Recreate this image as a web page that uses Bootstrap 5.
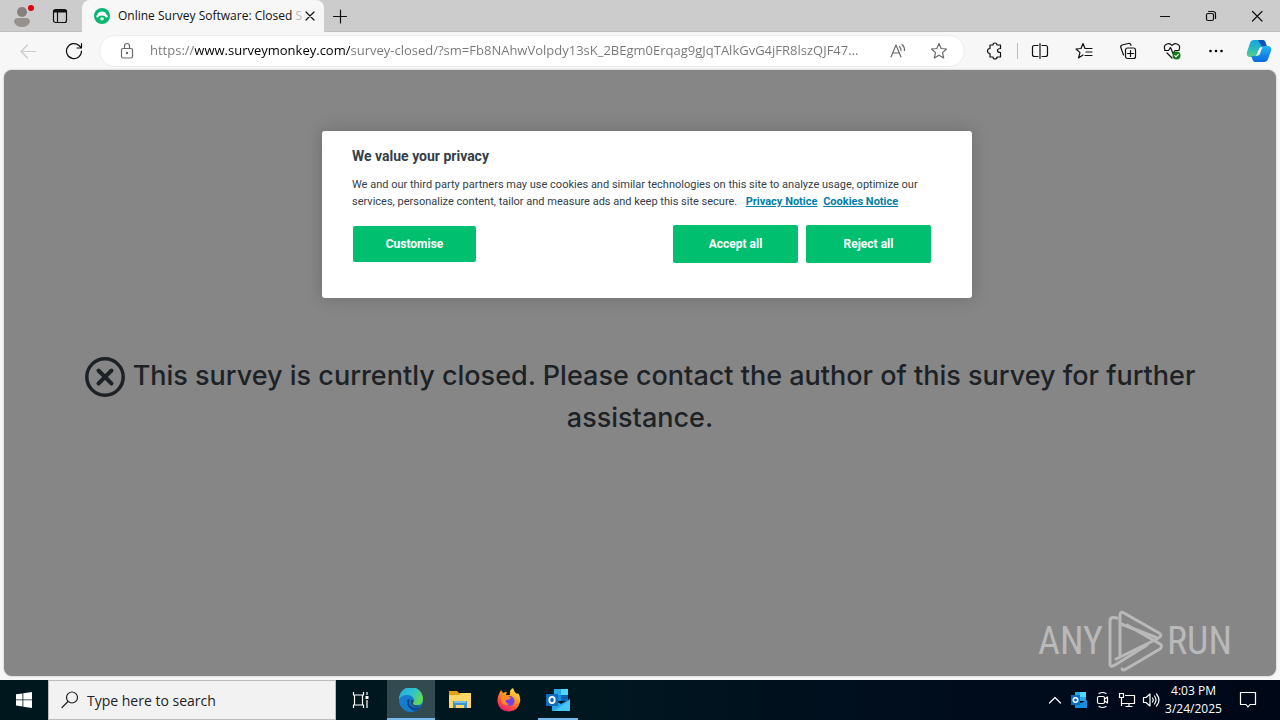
<!DOCTYPE html>
<html lang="en">
<head>
<meta charset="utf-8">
<meta name="viewport" content="width=device-width, initial-scale=1">
<title>Online Survey Software: Closed Survey</title>
<link rel="stylesheet" href="https://cdn.jsdelivr.net/npm/bootstrap@5.3.0/dist/css/bootstrap.min.css">
<style>
  body { font-family: "Open Sans", "Noto Sans", sans-serif; background: #f7f7f7; color: #111; }
  svg { display: block; flex: none; }
  .line-icon { fill: none; stroke: currentColor; stroke-width: 1.2; stroke-linecap: round; stroke-linejoin: round; }
  .icon-btn { border: 0; background: none; padding: 0; color: inherit; display: flex; align-items: center; justify-content: center; flex: none; }
  .icon-btn:disabled { color: #ccc; }
  .tab-strip { height: 32px; background: #ccc; border-bottom: 1px solid #c0c0c0; }
  .strip-tools { width: 82px; padding-left: 8px; border-radius: 0 0 6px 0; }
  .page-tab { width: 242px; height: 32px; background: #f7f7f7; border-radius: 8px 8px 0 0; font-size: 12px; padding: 0 8px 0 12px; }
  .tab-title { white-space: nowrap; }
  .tab-title span { color: #bbb; }
  .win-btn { width: 46px; height: 32px; }
  .tool-bar { height: 38px; }
  .nav-btns { width: 91px; }
  .address { height: 32px; background: #fff; border-radius: 16px; border: 1px solid #ececec; color: #6b6b6b; padding: 0 16px; }
  .address input { border: 0; outline: 0; padding: 0; font-size: 13px; min-width: 0; color: transparent;
    background: linear-gradient(90deg, #767676 45px, #000 45px, #000 200px, #767676 200px); -webkit-background-clip: text; background-clip: text; }
  .ext-btn { width: 44px; height: 32px; }
  .web-page { background: #868686; border-radius: 8px; margin: 0 4px 4px; box-shadow: 0 0 2px #aaa; }
  .closed-note { font-family: Inter, Roboto, sans-serif; font-size: 27px; font-weight: 500; line-height: 41px; color: #1d2227; padding: 285px 76px 0; }
  .closed-note svg { display: inline-block; vertical-align: -12px; margin-right: 8px; }
  .consent-layer { position: absolute; inset: 61px 0 auto 14px; }
  .consent { width: 650px; min-height: 167px; background: #fff; border-radius: 3px; box-shadow: 0 0 18px rgba(0,0,0,.2); padding: 16px 41px 0 30px; font-family: Roboto, sans-serif; color: #333e48; }
  .consent h2 { font-size: 14px; line-height: 18px; font-weight: 700; margin-bottom: 11px; }
  .consent p { font-size: 11px; line-height: 17px; margin-bottom: 15px; }
  .consent a { color: #007faa; font-weight: 700; margin-left: 3px; }
  .consent-btn { width: 125px; height: 38px; background: #00bf6f; color: #fff; border: 0; border-radius: 2px; font-size: 12px; font-weight: 700; padding: 0; }
  .consent-btn.outer { border: 1px solid #fff; border-radius: 3px; }
  .watermark { position: absolute; right: 44px; bottom: 3px; color: #b9b9b9; font-family: "Liberation Sans Narrow", "Roboto Condensed", Roboto, sans-serif; font-size: 38px; line-height: 64px; }
  .task-bar { height: 40px; background: linear-gradient(90deg, #00171e, #001720 45%, #000c1c 75%, #000818); color: #fff; }
  .start-btn { width: 48px; height: 40px; }
  .search-box { width: 288px; height: 40px; background: #f2f2f2; border: 1px solid #bbb; color: #222; padding-left: 12px; }
  .search-box input { border: 0; outline: 0; background: none; font-size: 14px; padding: 0; min-width: 0; }
  .search-box input::placeholder { color: #222; opacity: 1; }
  .app-btn { width: 49px; height: 40px; }
  .app-btn.active { background: #334a51; width: 48px; margin-left: 2px; }
  .app-btn.active, .app-btn.open { box-shadow: inset 0 -2px #76b9ed; }
  .app-btn.open { width: 40px; margin-left: 5px; }
  .clock { width: 61px; font-size: 12px; line-height: 18px; white-space: nowrap; }
  .tray-btn { width: 24px; height: 40px; }
</style>
</head>
<body class="d-flex flex-column vh-100 overflow-hidden">

<header>
  <div class="tab-strip d-flex">
    <div class="strip-tools d-flex align-items-center gap-3">
      <button class="icon-btn" aria-label="Profile">
        <svg width="28" height="28" viewBox="0 0 28 28"><circle cx="14" cy="10" r="5" fill="#85807d"/><path d="M6 20q0-4 4-4h8q4 0 4 4-2 5-8 5t-8-5z" fill="#98928f"/><circle cx="23" cy="6" r="3" fill="#e3000f"/></svg>
      </button>
      <button class="icon-btn" aria-label="Tab actions">
        <svg class="line-icon" width="16" height="16" viewBox="0 0 16 16"><rect x="1.5" y="1.5" width="13" height="13" rx="2"/><path d="M1.500 4h13M5.500 4v10" /><path d="M2 3h12" stroke-width="2"/></svg>
      </button>
    </div>
    <div class="page-tab d-flex align-items-center">
      <svg width="16" height="16" viewBox="0 0 16 16"><circle cx="8" cy="8" r="8" fill="#05b771"/><path d="M3 9.500a1.500 1.500 0 0 1 .5-2.800C4 4.500 5.700 3.500 8 3.500s4 1 4.500 3.200A1.500 1.500 0 0 1 13 9.500c-1 .3-1.500-.3-1.700-1-2-1.300-4.600-1.300-6.600 0-.2.700-.7 1.300-1.700 1z" fill="#fff"/><path d="M6 10.500q2-2.500 4 0-.2 2-2 2t-2-2z" fill="#dff7ec"/></svg>
      <div class="tab-title ms-2">Online Survey Software: Closed <span>S</span></div>
      <button class="icon-btn ms-auto" aria-label="Close tab"><svg class="line-icon" width="12" height="16" viewBox="2 0 12 16"><path d="M4 4l8 8M12 4l-8 8"/></svg></button>
    </div>
    <button class="icon-btn ms-2" aria-label="New tab"><svg class="line-icon" width="16" height="16" viewBox="0 0 16 16"><path d="M1.500 8.500h13M8.500 2v13"/></svg></button>
    <div class="ms-auto d-flex">
      <button class="icon-btn win-btn" aria-label="Minimize"><svg class="line-icon" width="12" height="12" viewBox="0 0 12 12"><path d="M1.500 6.500h9"/></svg></button>
      <button class="icon-btn win-btn" aria-label="Restore"><svg class="line-icon" width="12" height="12" viewBox="0 0 12 12"><rect x="1.500" y="3.500" width="7" height="7" rx="1.500"/><path d="M3.500 1.500H8q2.500 0 2.500 2.500v4.500"/></svg></button>
      <button class="icon-btn win-btn" aria-label="Close"><svg class="line-icon" width="12" height="12" viewBox="0 0 12 12"><path d="M1.500 1.500l9.500 9.500M11 1.500L1.500 11"/></svg></button>
    </div>
  </div>

  <div class="tool-bar d-flex align-items-center">
    <div class="nav-btns d-flex align-items-center justify-content-between ps-3 pe-2 me-2">
      <button class="icon-btn ms-1" aria-label="Back" disabled><svg class="line-icon" width="16" height="16" viewBox="0 0 16 16"><path d="M15.500 8.500H1M7.500 2L1 8.500 7.500 15"/></svg></button>
      <button class="icon-btn" aria-label="Refresh"><svg class="line-icon" width="18" height="18" viewBox="0 0 18 18"><path d="M16.500 9A7.500 7.500 0 1 1 14 3.500l2 2M16.500 1.500v4.500H12"/></svg></button>
    </div>
    <div class="address flex-grow-1 d-flex align-items-center">
      <svg class="line-icon ms-1 me-3" width="14" height="18" viewBox="0 0 14 18"><rect x="1.500" y="6.500" width="11" height="9.500" rx="1.500"/><path d="M4.500 6V4a2.500 2.500 0 0 1 5 0v2"/><circle cx="7" cy="11" r=".6" fill="currentColor"/></svg>
      <input class="flex-grow-1" type="text" aria-label="Address" value="https://www.surveymonkey.com/survey-closed/?sm=Fb8NAhwVolpdy13sK_2BEgm0Erqag9gJqTAlkGvG4jFR8lszQJF47...">
      <button class="icon-btn ms-2 me-4" aria-label="Read aloud"><svg class="line-icon" width="16" height="16" viewBox="0 0 16 16"><path d="M1 14L6 2l5 12M3 10h6M9.500 3.500q1.500 1.500 1.500 4M12 1.500q3 3 2.500 6"/></svg></button>
      <button class="icon-btn" aria-label="Add to favorites"><svg class="line-icon" width="18" height="18" viewBox="0 0 18 18"><path d="M9 1.500l2.200 5 5.300.5-4 3.600 1.200 5.400L9 13.200 4.300 16l1.200-5.400-4-3.600 5.300-.5z"/></svg></button>
    </div>
    <div class="d-flex align-items-center ms-2">
      <button class="icon-btn ext-btn" aria-label="Extensions"><svg class="line-icon" width="18" height="18" viewBox="0 0 18 18"><path d="M4 3h3q0-2 2-2t2 2h3.500v3.500q-3 0-3 2t3 2V15H11q0 2-2 2t-2-2H4v-3.500q-2.500 0-2.500-2.500T4 6.500z"/></svg></button>
      <div class="vr my-2"></div>
      <button class="icon-btn ext-btn" aria-label="Split screen"><svg class="line-icon" width="18" height="18" viewBox="0 0 18 18"><path d="M7 3.500H3.500Q1.500 3.500 1.500 5v7.500q0 2 2 2H7M11 3.500h3.500q2 0 2 2v7q0 2-2 2H11M9 1.500v15"/></svg></button>
      <button class="icon-btn ext-btn" aria-label="Favorites"><svg class="line-icon" width="18" height="18" viewBox="0 0 18 18"><path d="M10 6.500L8 1.500l-2 5-5 .5 4 3.600L3.500 16 8 13M10 6.500h7M11 10h6M10 13.500h7"/></svg></button>
      <button class="icon-btn ext-btn" aria-label="Collections"><svg class="line-icon" width="18" height="18" viewBox="0 0 18 18"><rect x="6.500" y="6" width="10" height="10.500" rx="2"/><path d="M11.500 8.500v6M8.500 11.500h6M4.500 13L2 6Q1 4 3 3l6.500-1.500q2-.5 2.500 2"/></svg></button>
      <button class="icon-btn ext-btn" aria-label="Browser essentials"><svg class="line-icon" width="18" height="18" viewBox="0 0 18 18"><path d="M2 8Q0 3.500 4 2q3-1 5 1.500Q11 1 14 2q4 1.500 2 6M1.500 8.500h4l2-3 2.500 6 2-3h4M4 11l5 5"/><circle cx="13.500" cy="13.500" r="4" fill="#107c10" stroke="none"/><path d="M11.800 13.700l1.200 1.200 2.300-2.500" stroke="#fff"/></svg></button>
      <button class="icon-btn ext-btn" aria-label="More"><svg width="16" height="6" viewBox="0 0 16 6"><circle cx="2.500" cy="3" r="1.300"/><circle cx="8" cy="3" r="1.300"/><circle cx="13.500" cy="3" r="1.300"/></svg></button>
      <button class="icon-btn me-2 ms-2" aria-label="Copilot"><svg width="26" height="26" viewBox="0 0 26 26"><defs><linearGradient id="cpA" x1="0" y1="0" x2="0" y2="1"><stop offset="0" stop-color="#13a4e6"/><stop offset=".5" stop-color="#28b9bc"/><stop offset="1" stop-color="#58cf89"/></linearGradient><linearGradient id="cpB" x1="0" y1="0" x2="0" y2="1"><stop offset="0" stop-color="#25b5f4"/><stop offset="1" stop-color="#0868dc"/></linearGradient></defs><path d="M8 2h9q2 0 3 4l1 3h-4q-3 0-4 3l-2 6q-1 1-3 1H4q-4 0-3-5L4 5q1-3 4-3z" fill="url(#cpA)"/><path d="M12 2h5q2 0 3 4l1 3h-5z" fill="#1552b7"/><path d="M18 8h4q4 0 3 5l-3 8q-1 3-4 3H9q-2 0-3-4l-1-2h5q3 0 4-3l2-6q1-1 2-1z" fill="url(#cpB)"/><path d="M13.500 10l3-1.500-3 8-3.500 1.500z" fill="#f7f7f7"/></svg></button>
    </div>
  </div>
</header>

<main class="web-page flex-grow-1 position-relative overflow-hidden">
  <h1 class="closed-note text-center m-0"><svg width="40" height="40" viewBox="0 0 40 40" fill="none" stroke="#1d2227" stroke-linecap="round"><circle cx="20" cy="20" r="18.200" stroke-width="3.500"/><path d="M13.500 13.500l13 13M26.500 13.500l-13 13" stroke-width="4"/></svg>This survey is currently closed. Please contact the author of this survey for further assistance.</h1>

  <div class="consent-layer d-flex justify-content-center">
    <section class="consent" role="dialog" aria-labelledby="consent-title">
      <h2 id="consent-title">We value your privacy</h2>
      <p><span>We and our third party partners may use cookies and similar technologies on this site to analyze usage, optimize our services, personalize content, tailor and measure ads and keep this site secure.</span>&nbsp; <a href="#">Privacy Notice</a> <a href="#">Cookies Notice</a></p>
      <div class="d-flex gap-2">
        <button class="consent-btn outer me-auto">Customise</button>
        <button class="consent-btn">Accept all</button>
        <button class="consent-btn">Reject all</button>
      </div>
    </section>
  </div>

  <div class="watermark d-flex align-items-center gap-1">
    <span>ANY</span>
    <svg width="56" height="62" viewBox="0 0 56 62" fill="none" stroke="#b9b9b9" stroke-width="3" stroke-linecap="round" stroke-linejoin="round"><path d="M10 8q-7-2-7 3v43q0 4 5 1L40 35"/><path d="M13 45V5q0-4 4-2l35 20q3 2 1 4t-5 0L14 14"/><path d="M9 49L50 29M15 59q1 2 4 0l34-20q3-3 0-5L20 15"/></svg>
    <span>RUN</span>
  </div>
</main>

<footer class="task-bar d-flex align-items-center flex-shrink-0">
  <button class="icon-btn start-btn" aria-label="Start"><svg width="16" height="16" viewBox="0 0 16 16" fill="#fff"><path d="M0 2.300L6.500 1.400v6.100H0zM7.300 1.300L16 0v7.500H7.300zM0 8.300h6.500v6.200L0 13.600zM7.300 8.300H16V16l-8.700-1.300z"/></svg></button>
  <div class="search-box d-flex align-items-center">
    <svg class="line-icon me-2" width="18" height="18" viewBox="0 0 18 18"><circle cx="11" cy="6.500" r="5.500"/><path d="M7 10.500L1 16.500"/></svg>
    <input class="flex-grow-1" type="text" aria-label="Search" placeholder="Type here to search">
  </div>
  <button class="icon-btn app-btn" aria-label="Task view"><svg width="18" height="18" viewBox="0 0 18 18" fill="none" stroke="#fff" stroke-width="1.200"><path d="M1.500 1v3h10V1M1.500 17v-3h10v3M2.500 4v10M10.500 4v10M15 1v3M15 9v8"/><path d="M13.500 5h3v3h-3z" fill="#fff" stroke="none"/></svg></button>
  <button class="icon-btn app-btn active" aria-label="Edge"><svg width="24" height="24" viewBox="0 0 24 24"><defs><linearGradient id="edA" x1="0" y1="0" x2="1" y2=".5"><stop offset="0" stop-color="#2aa9e0"/><stop offset=".6" stop-color="#2fc5cb"/><stop offset="1" stop-color="#62d85a"/></linearGradient></defs><circle cx="12" cy="12" r="12" fill="#147dd0"/><path d="M0 11A12 12 0 0 1 24 11q0 6-6 6-4 0-4-2 2-2 1-4-2-4-7-4-5 0-8 4z" fill="url(#edA)"/><path d="M8 12q-1 9 8 11 4-1 6-5-6 3-10 0-3-3-1-7-2 0-3 1z" fill="#0c4a92"/><path d="M12 12q-1 4 2 6 4 2 8-.5l2 2.500V17q-3 1-7 .5-4-.5-3-2.500 1-1 0-3z" fill="#334a51"/></svg></button>
  <button class="icon-btn app-btn" aria-label="File Explorer"><svg width="22" height="20" viewBox="0 0 22 20"><path d="M0 1h8l2 2h11v4H0z" fill="#e6a117"/><path d="M0 5h10l2-2h10v15H0z" fill="#ffd767"/><path d="M4 11h14v7h-3v-3H7v3H4z" fill="#3d92d0"/><path d="M5 11h12v2H5z" fill="#76bde8"/></svg></button>
  <button class="icon-btn app-btn" aria-label="Firefox"><svg width="24" height="24" viewBox="0 0 24 24"><defs><linearGradient id="ffA" x1=".8" y1="0" x2=".2" y2="1"><stop offset="0" stop-color="#fff14d"/><stop offset=".4" stop-color="#ff9a1f"/><stop offset=".7" stop-color="#ff4b42"/><stop offset="1" stop-color="#e31587"/></linearGradient></defs><path d="M2 6l2-4 2 3q2-1 4-1l-1 3h4q-1-5 3-7 1 4 4 6l1-1q3 4 2 9-2 9-11 9.500Q2 23 .5 14 0 10 2 6z" fill="url(#ffA)"/><circle cx="12.500" cy="13" r="5" fill="#7542e5"/><path d="M5 8q5-2 9 2-2 2-5 2-1 3 3 4-4 3-7-1-2-3 0-7z" fill="#ff8a23"/></svg></button>
  <button class="icon-btn app-btn open" aria-label="Outlook"><svg width="24" height="22" viewBox="0 0 24 22"><path d="M8 0h14v12H8z" fill="#1490df"/><path d="M15 0h7v6h-7z" fill="#50d9ff"/><path d="M8 0h7v6H8z" fill="#28a8ea"/><path d="M15 6h7v6h-7z" fill="#0364b8"/><path d="M6 10l9 5 9-5v12H6z" fill="#28a8ea"/><path d="M24 11v11H8z" fill="#47c5f4"/><path d="M0 5h12v12H0z" fill="#0f6cbd"/><ellipse cx="6" cy="11" rx="2.700" ry="3.200" fill="none" stroke="#fff" stroke-width="1.800"/></svg></button>

  <div class="ms-auto d-flex align-items-center">
    <button class="icon-btn tray-btn" aria-label="Hidden icons"><svg class="line-icon" width="14" height="10" viewBox="0 0 14 10"><path d="M1.500 8L7 2.500 12.500 8"/></svg></button>
    <button class="icon-btn tray-btn" aria-label="Outlook notifications"><svg width="16" height="16" viewBox="0 0 16 16"><path d="M4 0h11v9H4z" fill="#28a8ea"/><path d="M9 0h6v5H9z" fill="#50d9ff"/><path d="M4 8l6 3 6-3v8H4z" fill="#1490df"/><path d="M0 3h9v10H0z" fill="#0f6cbd"/><circle cx="4.500" cy="8" r="2.300" fill="none" stroke="#fff" stroke-width="1.400"/></svg></button>
    <button class="icon-btn tray-btn" aria-label="Meet now"><svg class="line-icon" width="14" height="18" viewBox="0 0 14 18"><rect x="1.500" y="5.500" width="7" height="7" rx="1.500"/><path d="M8.500 8l3-2v6l-3-2M3 2.500q3.500-2 7 0M3 15.500q3.500 2 7 0"/></svg></button>
    <button class="icon-btn tray-btn" aria-label="Network"><svg class="line-icon" width="18" height="16" viewBox="0 0 18 16"><path d="M7.500 3.500h9v8h-12M8 14.500h6M11 11.500v3M1.500 1.500h4v4h-4zM3.500 5.500v8"/></svg></button>
    <button class="icon-btn tray-btn" aria-label="Volume"><svg class="line-icon" width="18" height="16" viewBox="0 0 18 16"><path d="M1.500 5.500H4l4-3.500v12l-4-3.500H1.500zM10.500 6q1.500 2 0 4M12.500 4q3 4 0 8M14.500 2q5 6 0 12"/></svg></button>
    <div class="clock text-center">4:03 PM<br>3/24/2025</div>
    <button class="icon-btn start-btn me-2" aria-label="Notifications"><svg class="line-icon" width="18" height="18" viewBox="0 0 18 18"><path d="M1.500 1.500h15v12H11L9 16l-2-2.500H1.500z"/></svg></button>
  </div>
</footer>

<script src="https://cdn.jsdelivr.net/npm/bootstrap@5.3.0/dist/js/bootstrap.bundle.min.js"></script>
</body>
</html>
